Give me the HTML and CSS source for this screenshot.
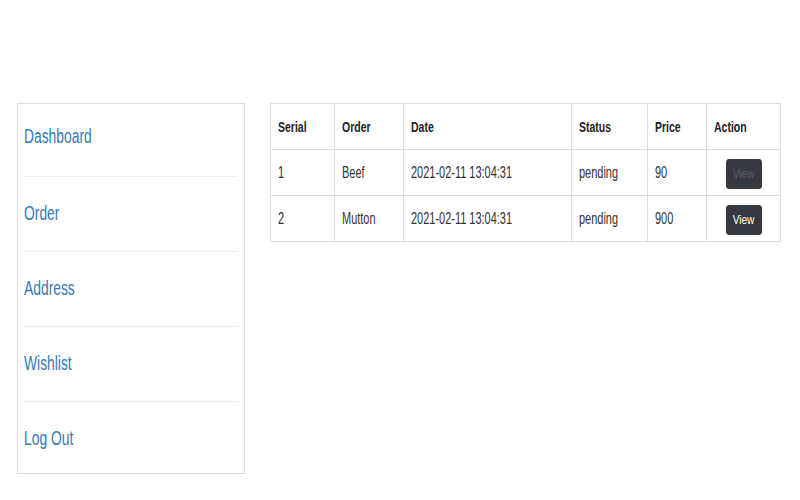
FILE: index.html
```html
<!DOCTYPE html>
<html lang="en">
<head>
<meta charset="utf-8">
<title>Orders</title>
<link rel="stylesheet" href="styles.css">
</head>
<body>
<div class="page">
  <aside class="sidebar">
    <ul class="menu">
      <li class="menu-item"><a class="nx" href="#">Dashboard</a></li>
      <li class="menu-item"><a class="nx" href="#">Order</a></li>
      <li class="menu-item"><a class="nx" href="#">Address</a></li>
      <li class="menu-item"><a class="nx" href="#">Wishlist</a></li>
      <li class="menu-item"><a class="nx" href="#">Log Out</a></li>
    </ul>
  </aside>
  <main class="content">
    <table class="orders">
      <colgroup>
        <col class="c-serial">
        <col class="c-order">
        <col class="c-date">
        <col class="c-status">
        <col class="c-price">
        <col class="c-action">
      </colgroup>
      <thead>
        <tr>
          <th><span class="nx">Serial</span></th>
          <th><span class="nx">Order</span></th>
          <th><span class="nx">Date</span></th>
          <th><span class="nx">Status</span></th>
          <th><span class="nx">Price</span></th>
          <th><span class="nx">Action</span></th>
        </tr>
      </thead>
      <tbody>
        <tr>
          <td><span class="nx">1</span></td>
          <td><span class="nx">Beef</span></td>
          <td><span class="nx">2021-02-11 13:04:31</span></td>
          <td><span class="nx">pending</span></td>
          <td><span class="nx">90</span></td>
          <td class="action"><button class="btn btn-dim" type="button"><span class="nx nx-center">View</span></button></td>
        </tr>
        <tr>
          <td><span class="nx">2</span></td>
          <td><span class="nx">Mutton</span></td>
          <td><span class="nx">2021-02-11 13:04:31</span></td>
          <td><span class="nx">pending</span></td>
          <td><span class="nx">900</span></td>
          <td class="action"><button class="btn" type="button"><span class="nx nx-center">View</span></button></td>
        </tr>
      </tbody>
    </table>
  </main>
</div>
</body>
</html>
```

FILE: styles.css
```css
* {
  box-sizing: border-box;
}

html, body {
  margin: 0;
  padding: 0;
  background: #fff;
}

body {
  font-family: "Liberation Sans", Arial, sans-serif;
  color: #333;
}

/* narrow rendering of the text */
.nx {
  display: inline-block;
  transform: scaleX(0.73);
  transform-origin: 0 50%;
  white-space: nowrap;
}

.nx-center {
  transform-origin: 50% 50%;
}

.page {
  padding: 103px 0 0 17px;
  display: flex;
  align-items: flex-start;
  gap: 25px;
}

.sidebar {
  width: 228px;
  flex: none;
  border: 1px solid #dcdcdc;
  padding: 0 6px;
}

.menu {
  list-style: none;
  margin: 0;
  padding: 0;
}

.menu-item {
  padding: 22px 0 24px;
  border-top: 1px solid #eeeeee;
  font-size: 19.5px;
  line-height: 28px;
  overflow: hidden;
}

.menu-item:first-child {
  border-top: none;
  padding-top: 18px;
  padding-bottom: 26px;
}

.menu-item:last-child {
  padding-bottom: 21px;
}

.menu-item a {
  color: #337ab7;
  text-decoration: none;
}

.menu-item .nx {
  transform: scaleX(0.71);
}

.content {
  flex: none;
}

.orders {
  table-layout: fixed;
  width: 510px;
  border-spacing: 0;
  border-top: 1px solid #dddddd;
  border-left: 1px solid #dddddd;
  font-size: 14.5px;
}

.c-serial { width: 64px; }
.c-order { width: 69px; }
.c-date { width: 168px; }
.c-status { width: 76px; }
.c-price { width: 59px; }
.c-action { width: 74px; }

.orders th,
.orders td {
  height: 46px;
  padding: 0 7px;
  border-right: 1px solid #dddddd;
  border-bottom: 1px solid #dddddd;
  vertical-align: middle;
  text-align: left;
  white-space: nowrap;
  overflow: hidden;
}

.orders th {
  font-size: 15px;
  font-weight: bold;
  color: #222;
}

.orders th .nx {
  transform: scaleX(0.7);
}

.orders td {
  font-size: 16.5px;
  color: #333;
}

.orders td .nx {
  transform: scaleX(0.665);
}

.orders td.action {
  text-align: center;
}

.orders td .btn .nx {
  transform: scaleX(0.75);
  transform-origin: 50% 50%;
}

.btn {
  display: inline-block;
  width: 36px;
  height: 30px;
  margin-top: 3px;
  padding: 0;
  border: none;
  border-radius: 3px / 4px;
  background: #343a40;
  color: #fff;
  font-family: "Liberation Sans", Arial, sans-serif;
  font-size: 13.5px;
  line-height: 30px;
  text-align: center;
  vertical-align: middle;
  overflow: hidden;
}

.btn-dim {
  color: #5a5f65;
}
```
